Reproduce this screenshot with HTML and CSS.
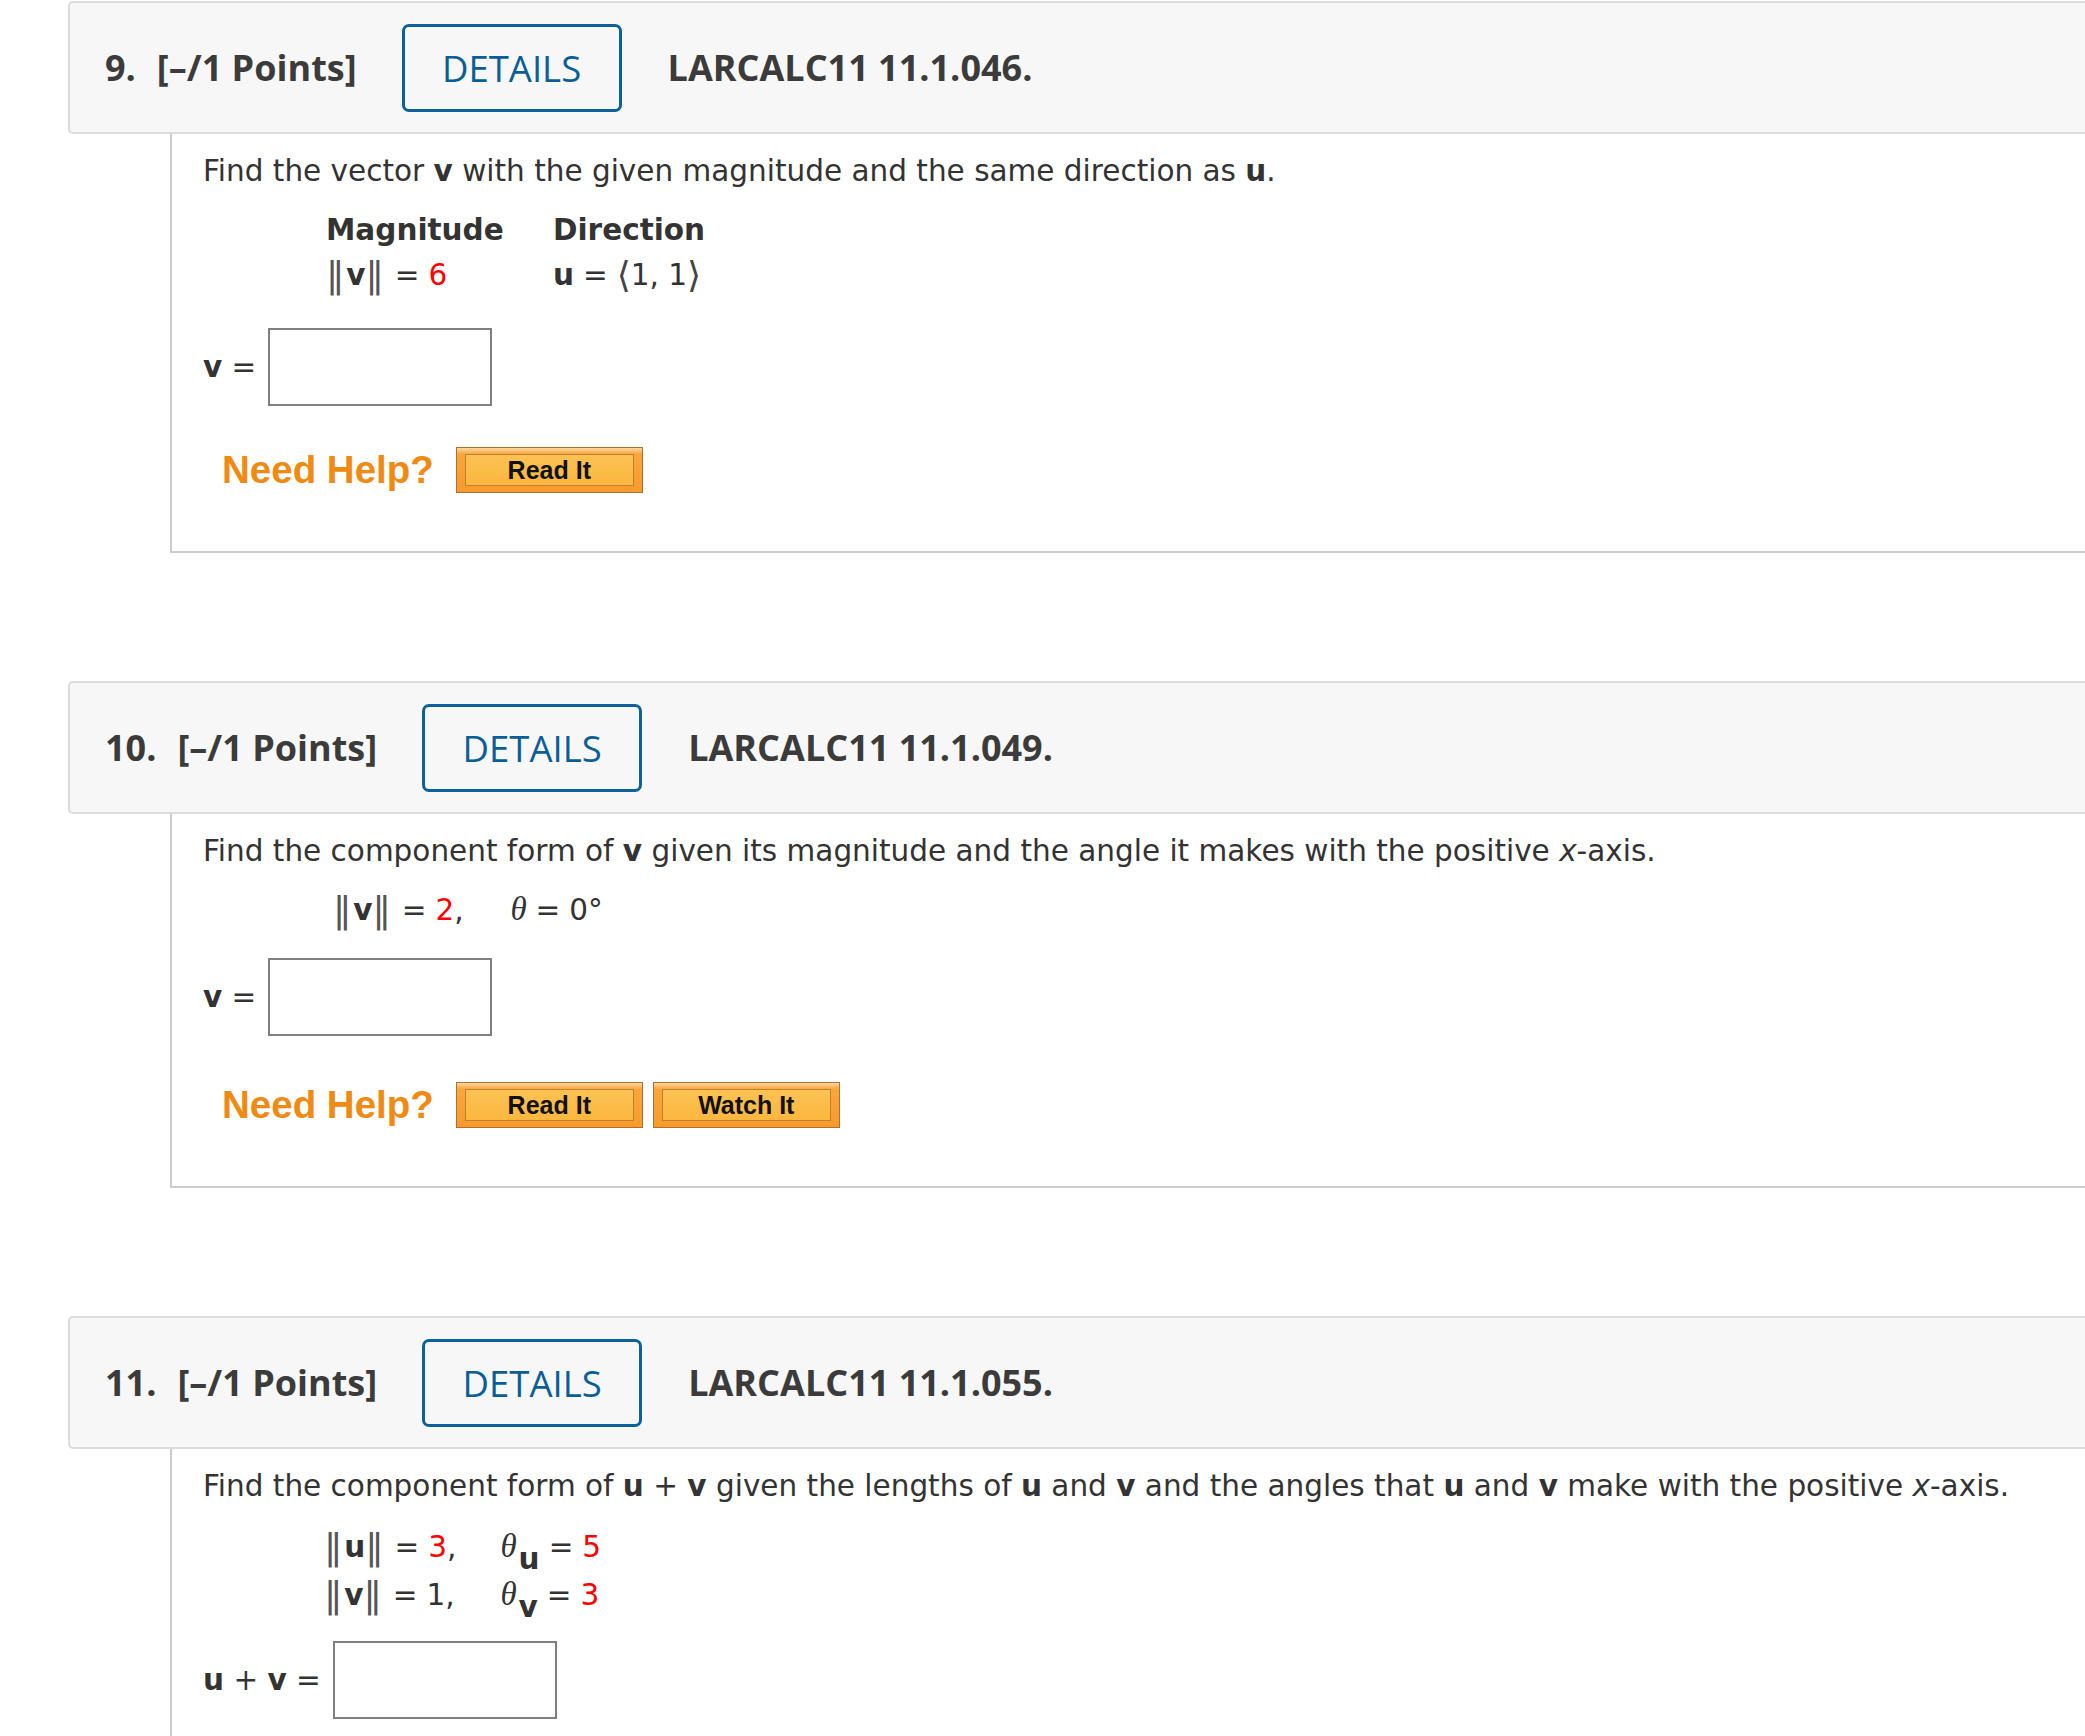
FILE: index.html
```html
<!DOCTYPE html>
<html lang="en">
<head>
<meta charset="utf-8">
<title>Questions</title>
<link rel="stylesheet" href="styles.css">
</head>
<body>
<div class="page">

  <div class="question q9">
    <div class="qhead">
      <span class="qnum">9.</span>
      <span class="qpts">[–/1 Points]</span>
      <button class="details">DETAILS</button>
      <span class="qcode">LARCALC11 11.1.046.</span>
    </div>
    <div class="qbody">
      <p class="prompt">Find the vector <b>v</b> with the given magnitude and the same direction as <b>u</b>.</p>
      <div class="given grid9">
        <div class="th">Magnitude</div>
        <div class="th">Direction</div>
        <div class="mr"><span class="nb open">||</span><b>v</b><span class="nb close">||</span><span class="rel">=</span><span class="red">6</span></div>
        <div class="mr"><b>u</b><span class="rel">=</span><span class="ang">⟨</span><span class="num">1, 1</span><span class="ang">⟩</span></div>
      </div>
      <div class="answer a9">
        <span class="lbl"><b>v</b> =</span>
        <span class="inbox"></span>
      </div>
      <div class="help h9">
        <span class="needhelp">Need Help?</span>
        <span class="hbtn"><span>Read It</span></span>
      </div>
    </div>
  </div>

  <div class="question q10">
    <div class="qhead">
      <span class="qnum">10.</span>
      <span class="qpts">[–/1 Points]</span>
      <button class="details">DETAILS</button>
      <span class="qcode">LARCALC11 11.1.049.</span>
    </div>
    <div class="qbody">
      <p class="prompt">Find the component form of <b>v</b> given its magnitude and the angle it makes with the positive <i>x</i>-axis.</p>
      <div class="given g10">
        <div class="mr">
          <span class="c1 c10"><span class="nb open">||</span><b>v</b><span class="nb close">||</span><span class="rel">=</span><span class="red">2</span>,</span>
          <span><span class="theta">θ</span><span class="rel">=</span>0°</span>
        </div>
      </div>
      <div class="answer a10">
        <span class="lbl"><b>v</b> =</span>
        <span class="inbox"></span>
      </div>
      <div class="help h10">
        <span class="needhelp">Need Help?</span>
        <span class="hbtn"><span>Read It</span></span>
        <span class="hbtn"><span>Watch It</span></span>
      </div>
    </div>
  </div>

  <div class="question q11">
    <div class="qhead">
      <span class="qnum">11.</span>
      <span class="qpts">[–/1 Points]</span>
      <button class="details">DETAILS</button>
      <span class="qcode">LARCALC11 11.1.055.</span>
    </div>
    <div class="qbody">
      <p class="prompt">Find the component form of <b>u</b> + <b>v</b> given the lengths of <b>u</b> and <b>v</b> and the angles that <b>u</b> and <b>v</b> make with the positive <i>x</i>-axis.</p>
      <div class="given g11">
        <div class="mr tall">
          <span class="c1 c11"><span class="nb open">||</span><b>u</b><span class="nb close">||</span><span class="rel">=</span><span class="red">3</span>,</span>
          <span><span class="theta">θ</span><b class="sub">u</b><span class="rel">=</span><span class="red">5</span></span>
        </div>
        <div class="mr tall">
          <span class="c1 c11"><span class="nb open">||</span><b>v</b><span class="nb close">||</span><span class="rel">=</span>1,</span>
          <span><span class="theta">θ</span><b class="sub">v</b><span class="rel">=</span><span class="red">3</span></span>
        </div>
      </div>
      <div class="answer a11">
        <span class="lbl"><b>u</b> + <b>v</b> =</span>
        <span class="inbox"></span>
      </div>
    </div>
  </div>

</div>
</body>
</html>
```

FILE: styles.css
```css
* { box-sizing: border-box; }

html, body {
  margin: 0;
  padding: 0;
  background: #ffffff;
}

body {
  width: 2085px;
  height: 1736px;
  overflow: hidden;
  font-family: "DejaVu Sans", Verdana, sans-serif;
  color: #333333;
}

.page {
  padding-top: 1px;
}

.question {
  margin-left: 68px;
}

.question + .question {
  margin-top: 128px;
}

/* header bar */
.qhead {
  height: 133px;
  display: flex;
  align-items: center;
  padding-left: 35px;
  background: #f7f7f7;
  border: 2px solid #dcdcdc;
  border-right: none;
  border-radius: 5px 0 0 5px;
  font-family: "Open Sans", sans-serif;
  font-weight: 700;
  font-size: 36px;
  color: #3b3b3b;
}

.qnum {
  margin-right: 21px;
}

.details {
  margin: 0 46px 0 45px;
  width: 220px;
  height: 88px;
  padding: 0;
  background: transparent;
  border: 3px solid #0b6299;
  border-radius: 7px;
  font-family: "Open Sans", sans-serif;
  font-weight: 400;
  font-size: 36.5px;
  color: #0a5e98;
}

/* body */
.qbody {
  margin-left: 102px;
  padding: 20px 0 58px 31px;
  border-left: 2px solid #cbcbcb;
  border-bottom: 2px solid #cbcbcb;
  font-size: 29.5px;
}

.q11 .qbody {
  border-bottom: none;
}

.prompt {
  margin: 0;
  line-height: 34px;
  white-space: nowrap;
}

.given {
  margin-top: 20px;
}

.grid9 {
  margin-left: 123px;
  display: grid;
  grid-template-columns: 227px auto;
}

.g10 { margin-left: 130px; }
.g11 { margin-left: 121px; }

.th {
  font-weight: bold;
  line-height: 45px;
}

.mr {
  line-height: 45px;
  white-space: nowrap;
}

.mr.tall {
  line-height: 48px;
}

.c1 {
  display: inline-block;
}

.c10 { width: 168px; }
.c11 { width: 167px; }

.nb {
  font-size: 36px;
  line-height: 0;
  letter-spacing: -6px;
  color: #555;
  vertical-align: -2px;
}

.nb.open {
  margin-right: 8px;
}

.nb.close {
  margin-right: 8px;
}

.rel {
  margin: 0 9px;
}

.red {
  color: #ff0000;
}

.ang {
  font-size: 36px;
  line-height: 0;
  color: #444;
  vertical-align: -2px;
}

.theta {
  font-family: "Liberation Serif", "DejaVu Serif", serif;
  font-style: italic;
  font-size: 33px;
  line-height: 0;
}

.sub {
  line-height: 0;
  vertical-align: -12px;
  margin-left: 2px;
}

/* answer */
.answer {
  display: flex;
  align-items: center;
}

.a9 { margin-top: 30px; }
.a10 { margin-top: 25px; }
.a11 { margin-top: 22px; }

.lbl {
  white-space: nowrap;
}

.inbox {
  margin-left: 12px;
  width: 224px;
  height: 78px;
  border: 2px solid #808080;
  background: #ffffff;
}

/* help */
.help {
  display: flex;
  align-items: center;
  padding-left: 19px;
}

.h9 { margin-top: 41px; }
.h10 { margin-top: 46px; }

.needhelp {
  font-family: "Liberation Sans", Arial, sans-serif;
  font-weight: bold;
  font-size: 38.5px;
  color: #ef8a12;
  margin-right: 22px;
}

.hbtn {
  width: 187px;
  height: 46px;
  display: flex;
  padding: 6px 8px;
  border: 1px solid #b06f2b;
  background: linear-gradient(#fdd8a2 0, #f8a63c 14%, #f79a2d 100%);
  margin-right: 10px;
}

.hbtn span {
  flex: 1;
  display: flex;
  align-items: center;
  justify-content: center;
  border: 1px solid #c1802f;
  background: linear-gradient(#fcc253, #fbb73f);
  font-family: "Liberation Sans", Arial, sans-serif;
  font-weight: bold;
  font-size: 25px;
  color: #111111;
}
```
